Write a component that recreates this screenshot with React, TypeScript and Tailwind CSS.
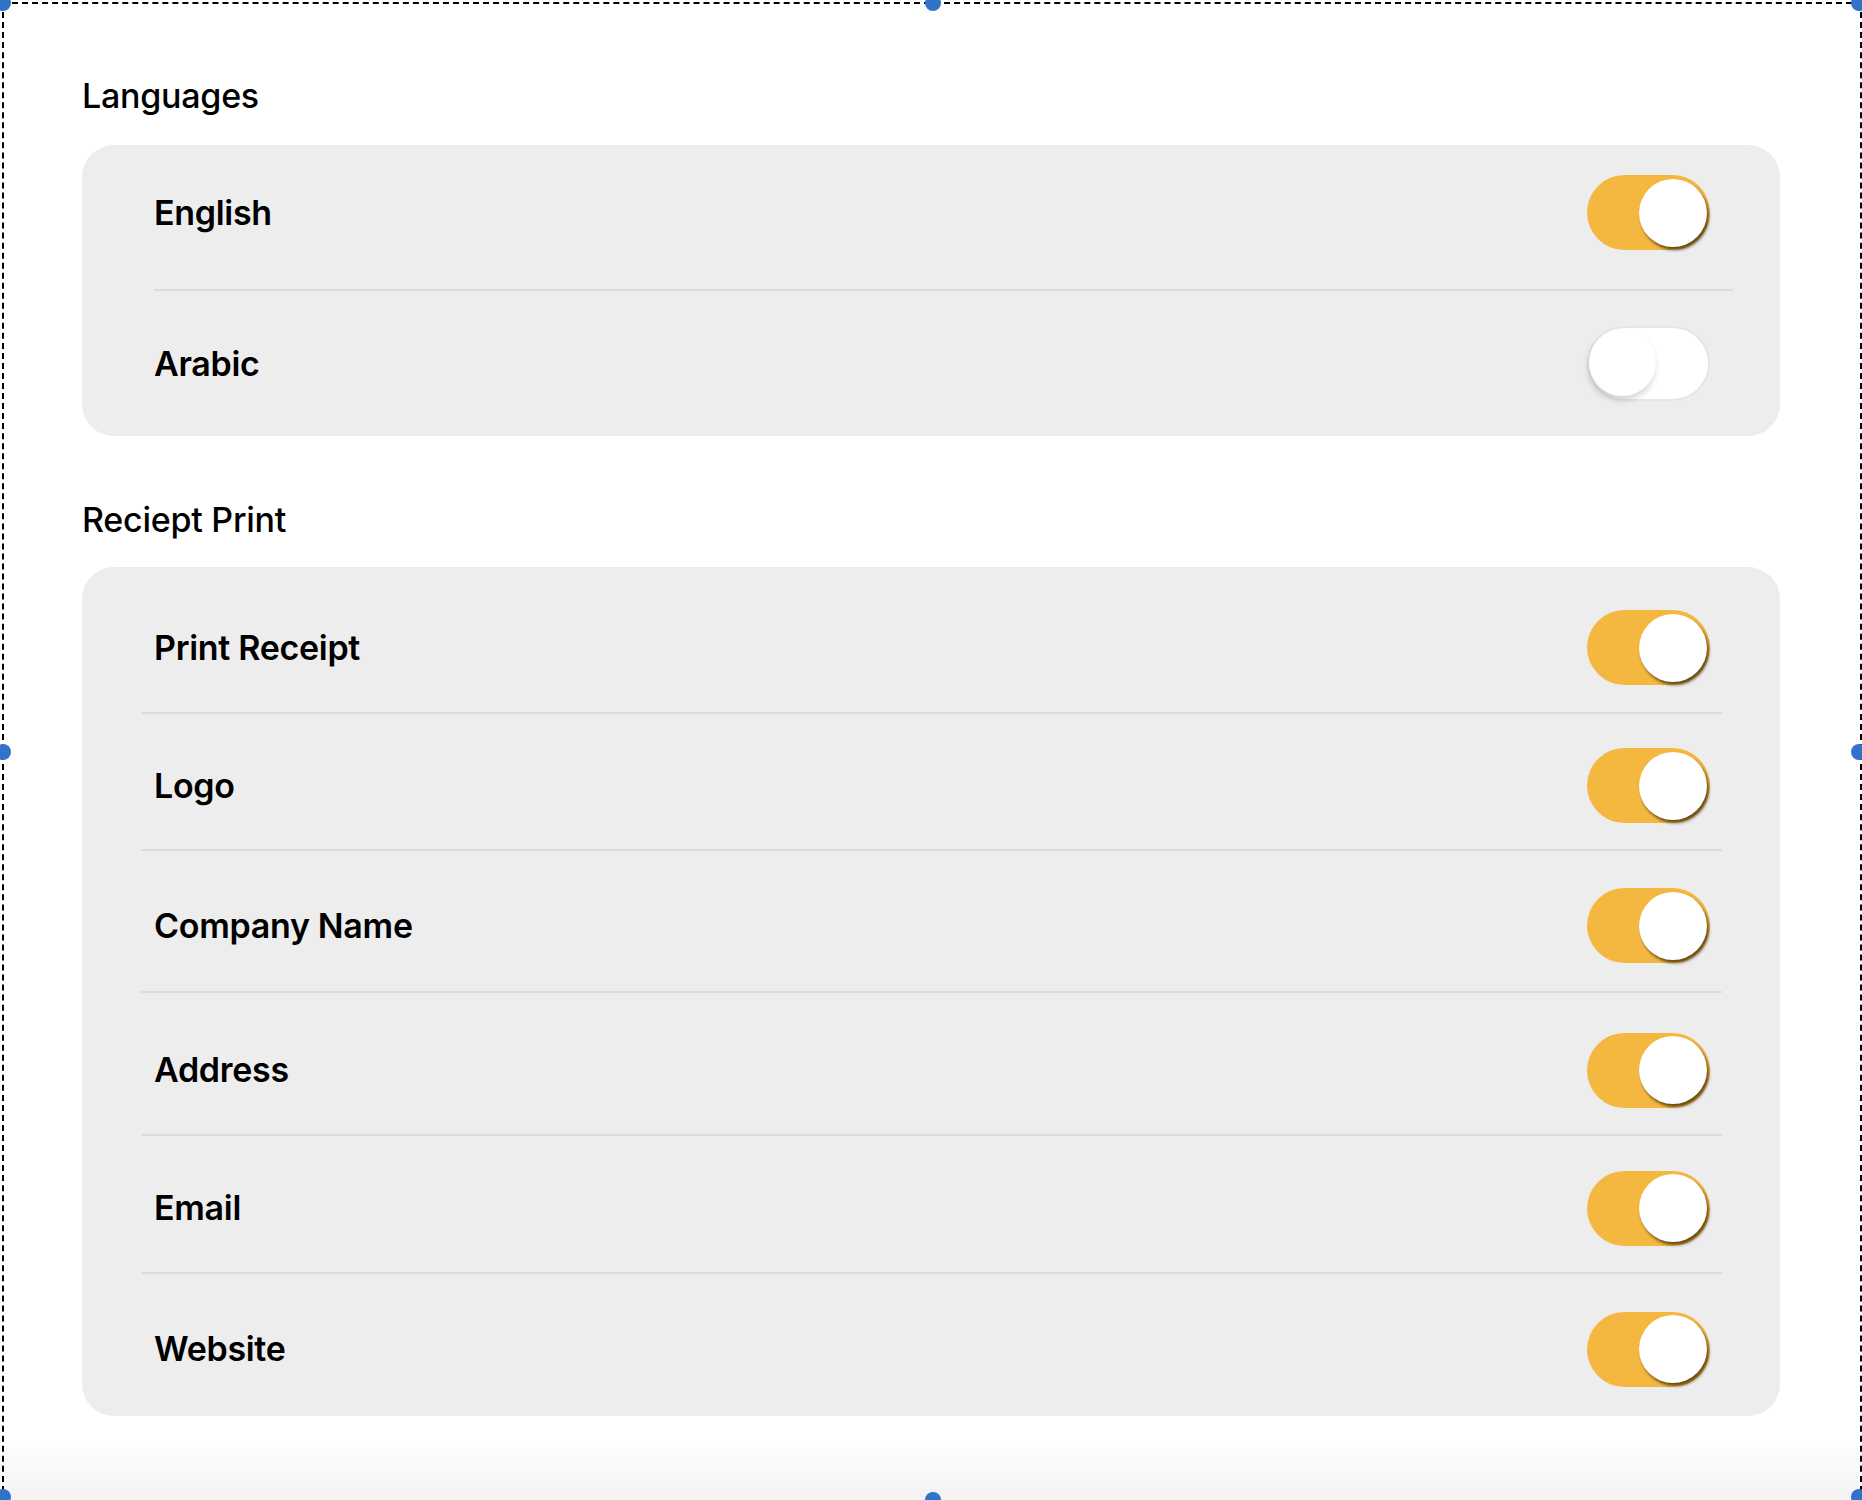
import React, { useState } from 'react';

type Row = {
  label: string;
  on: boolean;
  // row box height + top padding (offsets the toggle/label centre like the mock)
  cls: string;
};

const languageRows: Row[] = [
  { label: 'English', on: true, cls: 'h-[144px] pb-[9px]' },
  { label: 'Arabic', on: false, cls: 'h-[145px]' },
];

const receiptRows: Row[] = [
  { label: 'Print Receipt', on: true, cls: 'h-[145px] pt-[16px]' },
  { label: 'Logo', on: true, cls: 'h-[135px] pt-[8px]' },
  { label: 'Company Name', on: true, cls: 'h-[140px] pt-[9px]' },
  { label: 'Address', on: true, cls: 'h-[141px] pt-[13px]' },
  { label: 'Email', on: true, cls: 'h-[136px] pt-[8px]' },
  { label: 'Website', on: true, cls: 'h-[142px] pt-[8px]' },
];

function Toggle({ on, onChange }: { on: boolean; onChange: () => void }) {
  return (
    <button
      onClick={onChange}
      className={`relative w-[123px] h-[75px] rounded-full shrink-0 ${
        on ? 'bg-[#f4b740]' : 'bg-white border-2 border-[#e6e6e6]'
      }`}
    >
      {on ? (
        <span className="absolute right-[3px] top-[3.5px] w-[68px] h-[68px] rounded-full bg-white shadow-[2px_3px_3px_rgba(60,40,0,0.75)]" />
      ) : (
        <span className="absolute left-0 top-[1px] w-[67px] h-[67px] rounded-full bg-white shadow-[-1px_4px_6px_rgba(0,0,0,0.18)]" />
      )}
    </button>
  );
}

function Section({
  title,
  rows,
  dividerCls,
  titleCls,
}: {
  title: string;
  rows: Row[];
  dividerCls: string;
  titleCls: string;
}) {
  const [state, setState] = useState(rows.map((r) => r.on));

  return (
    <section>
      <h2 className={`text-[34px] leading-[40px] font-medium tracking-[-0.25px] text-black ${titleCls}`}>{title}</h2>
      <div className="bg-[#ededed] rounded-[32px]">
        {rows.map((row, i) => (
          <div key={row.label}>
            {i > 0 && <div className={`h-[2px] bg-[#dcdcdc] ${dividerCls}`} />}
            <div className={`flex items-center justify-between pl-[72px] pr-[70px] ${row.cls}`}>
              <span className="text-[34px] leading-[40px] font-semibold tracking-[-0.3px] text-black">{row.label}</span>
              <Toggle
                on={state[i]}
                onChange={() => setState(state.map((v, j) => (j === i ? !v : v)))}
              />
            </div>
          </div>
        ))}
      </div>
    </section>
  );
}

export default function App() {
  return (
    <div
      className="relative w-full h-[1500px] bg-white overflow-hidden"
      style={{ fontFamily: 'Inter, "Noto Sans", sans-serif' }}
    >
      {/* bottom fade */}
      <div className="absolute left-0 right-0 bottom-0 h-[60px] bg-gradient-to-b from-white to-[#f3f3f3]" />

      {/* selection frame */}
      <div className="relative ml-[2px] mt-[2px] h-[1520px] border-2 border-dashed border-black">
        <div className="pl-[78px] pr-[80px] pt-[72px]">
          <Section
            title="Languages"
            rows={languageRows}
            dividerCls="ml-[72px] mr-[47px]"
            titleCls="mb-[29px]"
          />
          <div className="h-[64px]" />
          <Section
            title="Reciept Print"
            rows={receiptRows}
            dividerCls="ml-[59px] mr-[58px]"
            titleCls="mb-[27px]"
          />
        </div>
      </div>

      {/* selection handles */}
      <span className="absolute -left-[5px] -top-[5px] w-[16px] h-[16px] rounded-full bg-[#3272c8]" />
      <span className="absolute left-[925px] -top-[5px] w-[16px] h-[16px] rounded-full bg-[#3272c8]" />
      <span className="absolute -right-[5px] -top-[5px] w-[16px] h-[16px] rounded-full bg-[#3272c8]" />
      <span className="absolute -left-[5px] top-[744px] w-[16px] h-[16px] rounded-full bg-[#3272c8]" />
      <span className="absolute -right-[5px] top-[744px] w-[16px] h-[16px] rounded-full bg-[#3272c8]" />
      <span className="absolute -left-[5px] -bottom-[5px] w-[16px] h-[16px] rounded-full bg-[#3272c8]" />
      <span className="absolute left-[925px] -bottom-[8px] w-[16px] h-[16px] rounded-full bg-[#3272c8]" />
      <span className="absolute -right-[5px] -bottom-[5px] w-[16px] h-[16px] rounded-full bg-[#3272c8]" />
    </div>
  );
}
